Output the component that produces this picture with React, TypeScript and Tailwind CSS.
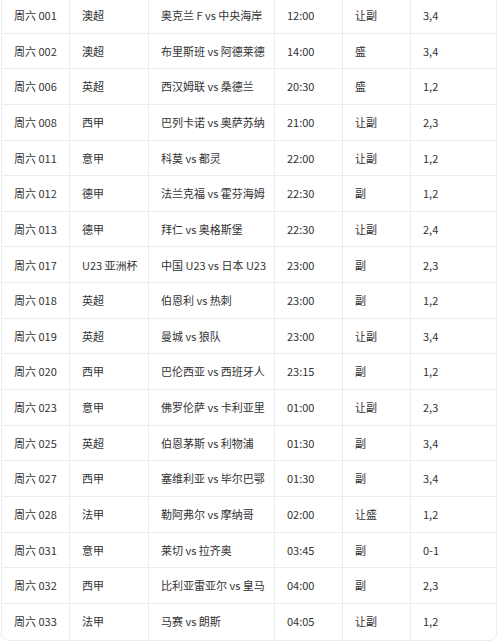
import React from 'react';

type Match = [string, string, string, string, string, string];

const rows: Match[] = [
  ['周六 001', '澳超', '奥克兰 F vs 中央海岸', '12:00', '让副', '3,4'],
  ['周六 002', '澳超', '布里斯班 vs 阿德莱德', '14:00', '盛', '3,4'],
  ['周六 006', '英超', '西汉姆联 vs 桑德兰', '20:30', '盛', '1,2'],
  ['周六 008', '西甲', '巴列卡诺 vs 奥萨苏纳', '21:00', '让副', '2,3'],
  ['周六 011', '意甲', '科莫 vs 都灵', '22:00', '让副', '1,2'],
  ['周六 012', '德甲', '法兰克福 vs 霍芬海姆', '22:30', '副', '1,2'],
  ['周六 013', '德甲', '拜仁 vs 奥格斯堡', '22:30', '让副', '2,4'],
  ['周六 017', 'U23 亚洲杯', '中国 U23 vs 日本 U23', '23:00', '副', '2,3'],
  ['周六 018', '英超', '伯恩利 vs 热刺', '23:00', '副', '1,2'],
  ['周六 019', '英超', '曼城 vs 狼队', '23:00', '让副', '3,4'],
  ['周六 020', '西甲', '巴伦西亚 vs 西班牙人', '23:15', '副', '1,2'],
  ['周六 023', '意甲', '佛罗伦萨 vs 卡利亚里', '01:00', '让副', '2,3'],
  ['周六 025', '英超', '伯恩茅斯 vs 利物浦', '01:30', '副', '3,4'],
  ['周六 027', '西甲', '塞维利亚 vs 毕尔巴鄂', '01:30', '副', '3,4'],
  ['周六 028', '法甲', '勒阿弗尔 vs 摩纳哥', '02:00', '让盛', '1,2'],
  ['周六 031', '意甲', '莱切 vs 拉齐奥', '03:45', '副', '0-1'],
  ['周六 032', '西甲', '比利亚雷亚尔 vs 皇马', '04:00', '副', '2,3'],
  ['周六 033', '法甲', '马赛 vs 朗斯', '04:05', '让副', '1,2'],
];

const cols = ['w-[68px]', 'w-[79px]', 'w-[126px]', 'w-[68px]', 'w-[68px]', 'w-[85px]'];

export default function App() {
  return (
    <div className="h-[644px] w-[497px] overflow-hidden bg-white">
      <div
        className="-mt-[3px] ml-[1px] w-[496px] overflow-hidden rounded-b-lg border border-[#ececec] text-[11px] text-[#333]"
        style={{ fontFamily: '"Noto Sans CJK SC", "Noto Sans", sans-serif' }}
      >
        {rows.map((row, i) => (
          <div
            key={i}
            className={`flex h-[35.65px] ${i < rows.length - 1 ? 'border-b border-[#ececec]' : ''}`}
          >
            {row.map((cell, j) => (
              <div
                key={j}
                className={`${cols[j]} flex shrink-0 items-center whitespace-nowrap pl-[12px] ${
                  j < row.length - 1 ? 'border-r border-[#ececec]' : ''
                }`}
              >
                {cell}
              </div>
            ))}
          </div>
        ))}
      </div>
    </div>
  );
}
